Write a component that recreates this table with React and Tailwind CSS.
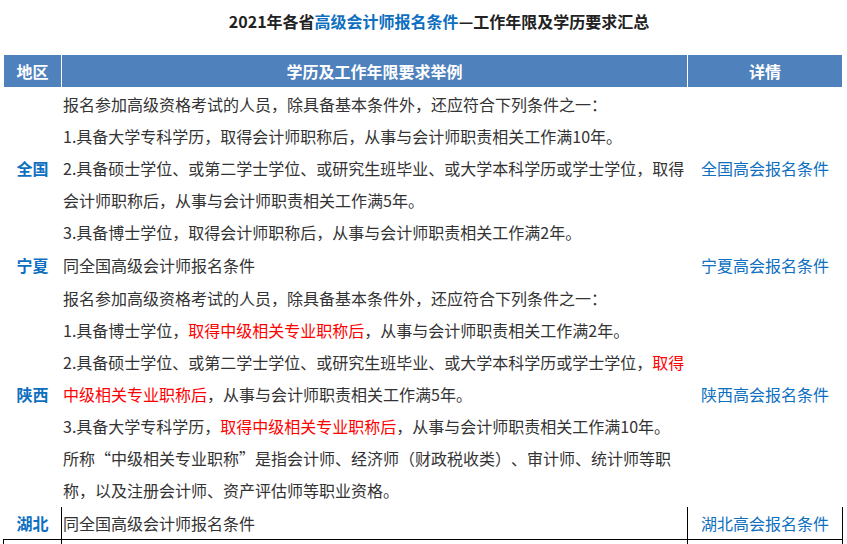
const blue = "text-[#0e6fc0]";

const Red = ({ children }) => <span className="text-[#ff0000]">{children}</span>;

const rows = [
  {
    region: "全国",
    link: "全国高会报名条件",
    lines: [
      "报名参加高级资格考试的人员，除具备基本条件外，还应符合下列条件之一：",
      "1.具备大学专科学历，取得会计师职称后，从事与会计师职责相关工作满10年。",
      "2.具备硕士学位、或第二学士学位、或研究生班毕业、或大学本科学历或学士学位，取得",
      "会计师职称后，从事与会计师职责相关工作满5年。",
      "3.具备博士学位，取得会计师职称后，从事与会计师职责相关工作满2年。",
    ],
  },
  {
    region: "宁夏",
    link: "宁夏高会报名条件",
    lines: ["同全国高级会计师报名条件"],
  },
  {
    region: "陕西",
    link: "陕西高会报名条件",
    lines: [
      "报名参加高级资格考试的人员，除具备基本条件外，还应符合下列条件之一：",
      <>1.具备博士学位，<Red>取得中级相关专业职称后</Red>，从事与会计师职责相关工作满2年。</>,
      <>2.具备硕士学位、或第二学士学位、或研究生班毕业、或大学本科学历或学士学位，<Red>取得</Red></>,
      <><Red>中级相关专业职称后</Red>，从事与会计师职责相关工作满5年。</>,
      <>3.具备大学专科学历，<Red>取得中级相关专业职称后</Red>，从事与会计师职责相关工作满10年。</>,
      "所称“中级相关专业职称”是指会计师、经济师（财政税收类）、审计师、统计师等职",
      "称，以及注册会计师、资产评估师等职业资格。",
    ],
  },
];

const Row = ({ region, link, lines }) => (
  <div className="flex">
    <div className={`w-[57px] flex items-center justify-center font-bold ${blue}`}>
      {region}
    </div>
    <div className="w-[626px] border-l border-transparent pl-px">
      {lines.map((line, i) => (
        <div key={i} className="h-8 leading-8 whitespace-nowrap">
          {line}
        </div>
      ))}
    </div>
    <div className={`w-[155px] border-l border-transparent flex items-center justify-center ${blue}`}>
      {link}
    </div>
  </div>
);

export default function App() {
  return (
    <div
      className="bg-white w-[847px] h-[544px] overflow-hidden text-[16px] text-[#333333] [text-spacing-trim:space-all]"
      style={{ fontFamily: '"Microsoft YaHei", "Noto Sans CJK SC", "Noto Sans", sans-serif' }}
    >
      <h1 className="pt-[5px] pl-[31px] h-[55px] text-center font-bold leading-8 text-[#222222]">
        2021年各省<span className={blue}>高级会计师报名条件</span>—工作年限及学历要求汇总
      </h1>

      <div className="ml-[4px] w-[838px] flex flex-col gap-px">
        <div className="flex h-8 bg-[#4f81bd] text-white font-bold leading-8">
          <div className="w-[57px] text-center">地区</div>
          <div className="w-[626px] border-l border-white text-center">学历及工作年限要求举例</div>
          <div className="w-[155px] border-l border-white text-center">详情</div>
        </div>

        {rows.map((r) => (
          <Row key={r.region} {...r} />
        ))}

        <div className="flex -ml-px w-[840px] border-b border-black">
          <div className={`w-[58px] h-8 flex items-center justify-center pl-px font-bold ${blue}`}>
            湖北
          </div>
          <div className="w-[626px] h-8 border-l border-black pl-px leading-8">
            同全国高级会计师报名条件
          </div>
          <div className={`w-[156px] h-8 border-l border-r border-black flex items-center justify-center ${blue}`}>
            湖北高会报名条件
          </div>
        </div>
        <div className="flex -ml-px -mt-px w-[840px]">
          <div className="w-[58px] h-8 border-l border-black" />
          <div className="w-[626px] h-8 border-l border-black" />
          <div className="w-[156px] h-8 border-l border-r border-black" />
        </div>
      </div>
    </div>
  );
}
